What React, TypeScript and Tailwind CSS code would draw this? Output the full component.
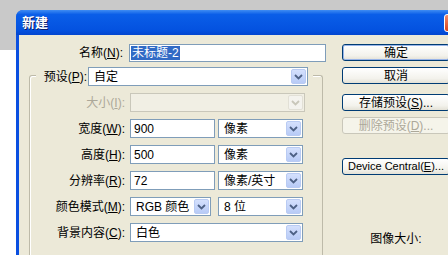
import React from 'react';

const FONT = 'font-["Liberation_Sans","Noto_Sans_CJK_SC",sans-serif]';

function Arrow({ disabled = false }: { disabled?: boolean }) {
  return (
    <span
      className={`flex h-[15px] w-[15px] flex-none items-center justify-center rounded-[2px] border ${
        disabled ? 'border-[#e2e0d6] bg-[#f4f3ee]' : 'border-[#b9cbf3] bg-[linear-gradient(#d4e0fd,#b8cbf6)]'
      }`}
    >
      <svg width="9" height="6" viewBox="0 0 9 6">
        <path d="M1 1l3.5 3.5L8 1" stroke={disabled ? '#c9c7ba' : '#4d6185'} strokeWidth="1.8" fill="none" />
      </svg>
    </span>
  );
}

function Select({ value, w, disabled = false }: { value?: string; w: string; disabled?: boolean }) {
  return (
    <div
      className={`flex h-[19px] flex-none items-center border pr-[1px] ${w} ${
        disabled ? 'border-[#c9c7ba] bg-[#f1efe4]' : 'border-[#7f9db9] bg-white'
      }`}
    >
      <span className="flex-1 pl-[5px] text-[12px] leading-none text-black">{value}</span>
      <Arrow disabled={disabled} />
    </div>
  );
}

function Input({ value, w }: { value: string; w: string }) {
  return (
    <div className={`flex h-[19px] flex-none items-center border border-[#7f9db9] bg-white pl-[3px] text-[12px] leading-none ${w}`}>
      {value}
    </div>
  );
}

function Label({ text, k, disabled = false }: { text: string; k: string; disabled?: boolean }) {
  return (
    <span className={`w-[95px] flex-none text-right text-[12px] leading-none ${disabled ? 'text-[#aca899]' : 'text-black'}`}>
      {text}(<u>{k}</u>):
    </span>
  );
}

function Btn({ children, disabled = false, def = false, mt, size = 'text-[12px]' }: { children: React.ReactNode; disabled?: boolean; def?: boolean; mt: string; size?: string }) {
  return (
    <div
      className={`flex h-[17px] w-[108px] items-center justify-center rounded-[3px] border leading-none ${size} ${mt} ${
        disabled
          ? 'border-[#c9c7ba] bg-[#f5f4ea] text-[#aca899]'
          : 'border-[#003c74] bg-[linear-gradient(#ffffff,#f3f2ec_70%,#e3e1d6)] text-black'
      } ${def ? 'shadow-[inset_0_0_0_1px_#98b4e8]' : ''}`}
    >
      {children}
    </div>
  );
}

export default function App() {
  return (
    <div className={`h-[255px] w-[448px] overflow-hidden bg-[linear-gradient(#c9c9c9_50px,#ffffff_50px)] pl-[16px] pt-[10px] ${FONT}`}>
      <div className="flex h-[260px] w-[446px] flex-col overflow-hidden rounded-tl-[7px] bg-[#0a4fe0]">
        {/* Title bar */}
        <div className="flex h-[25px] flex-none items-center justify-between bg-[linear-gradient(#3f8cf3,#0a5ee8_18%,#0452e0_80%,#0345cf)] pl-[6px]">
          <span className="text-[13px] font-bold text-white [text-shadow:1px_1px_0_#0a1c6a]">新建</span>
          <span className="mt-[1px] h-[18px] w-[18px] rounded-[3px] border border-white bg-[linear-gradient(#f08a6a,#d8431c)]" />
        </div>

        {/* Body */}
        <div className="ml-[3px] flex flex-1 bg-[#ece9d8]">
          {/* Left column */}
          <div className="w-[311px] flex-none">
            <div className="mt-[9px] flex h-[18px] items-center">
              <span className="w-[104px] text-right text-[12px] leading-none text-black">
                名称(<u>N</u>):
              </span>
              <div className="ml-[6px] flex h-[18px] w-[197px] items-center border border-[#7f9db9] bg-white pl-[1px]">
                <span className="bg-[#316ac5] px-[1px] text-[12px] leading-[14px] text-white">未标题-2</span>
              </div>
            </div>

            {/* Preset group box */}
            <div className="ml-[10px] mt-[13px] h-[200px] w-[294px] rounded-t-[3px] border border-b-0 border-[#bdbaa9] shadow-[inset_1px_1px_0_#fff]">
              <div className="-mt-[9px] flex items-center pl-[6px]">
                <span className="w-[52px] bg-[#ece9d8] pr-[1px] text-right text-[12px] leading-[18px] text-black">
                  预设(<u>P</u>):
                </span>
                <Select value="自定" w="w-[220px]" />
                <span className="h-[4px] w-[5px] bg-[#ece9d8]" />
              </div>

              <div className="mt-[7px] flex flex-col gap-[7px]">
                <div className="flex items-center gap-[5px]">
                  <Label text="大小" k="I" disabled />
                  <Select w="w-[175px]" disabled />
                </div>
                <div className="flex items-center gap-[5px]">
                  <Label text="宽度" k="W" />
                  <Input value="900" w="w-[85px]" />
                  <Select value="像素" w="w-[85px] ml-[-2px]" />
                </div>
                <div className="flex items-center gap-[5px]">
                  <Label text="高度" k="H" />
                  <Input value="500" w="w-[85px]" />
                  <Select value="像素" w="w-[85px] ml-[-2px]" />
                </div>
                <div className="flex items-center gap-[5px]">
                  <Label text="分辨率" k="R" />
                  <Input value="72" w="w-[85px]" />
                  <Select value="像素/英寸" w="w-[85px] ml-[-2px]" />
                </div>
                <div className="flex items-center gap-[5px]">
                  <Label text="颜色模式" k="M" />
                  <Select value="RGB 颜色" w="w-[81px]" />
                  <Select value="8 位" w="w-[85px] ml-[2px]" />
                </div>
                <div className="flex items-center gap-[5px]">
                  <Label text="背景内容" k="C" />
                  <Select value="白色" w="w-[173px]" />
                </div>
              </div>
            </div>
          </div>

          {/* Right column */}
          <div className="ml-[12px] flex flex-none flex-col pt-[9px]">
            <Btn mt="" def>确定</Btn>
            <Btn mt="mt-[6px]">取消</Btn>
            <Btn mt="mt-[10px]">
              存储预设(<u>S</u>)...
            </Btn>
            <Btn mt="mt-[6px]" disabled>
              删除预设(<u>D</u>)...
            </Btn>
            <Btn mt="mt-[24px]" size="text-[11px]">
              Device Central(<u>E</u>)...
            </Btn>
            <div className="mt-[58px] w-[108px] text-center text-[12px] leading-none text-black">图像大小:</div>
          </div>
        </div>
      </div>
    </div>
  );
}
